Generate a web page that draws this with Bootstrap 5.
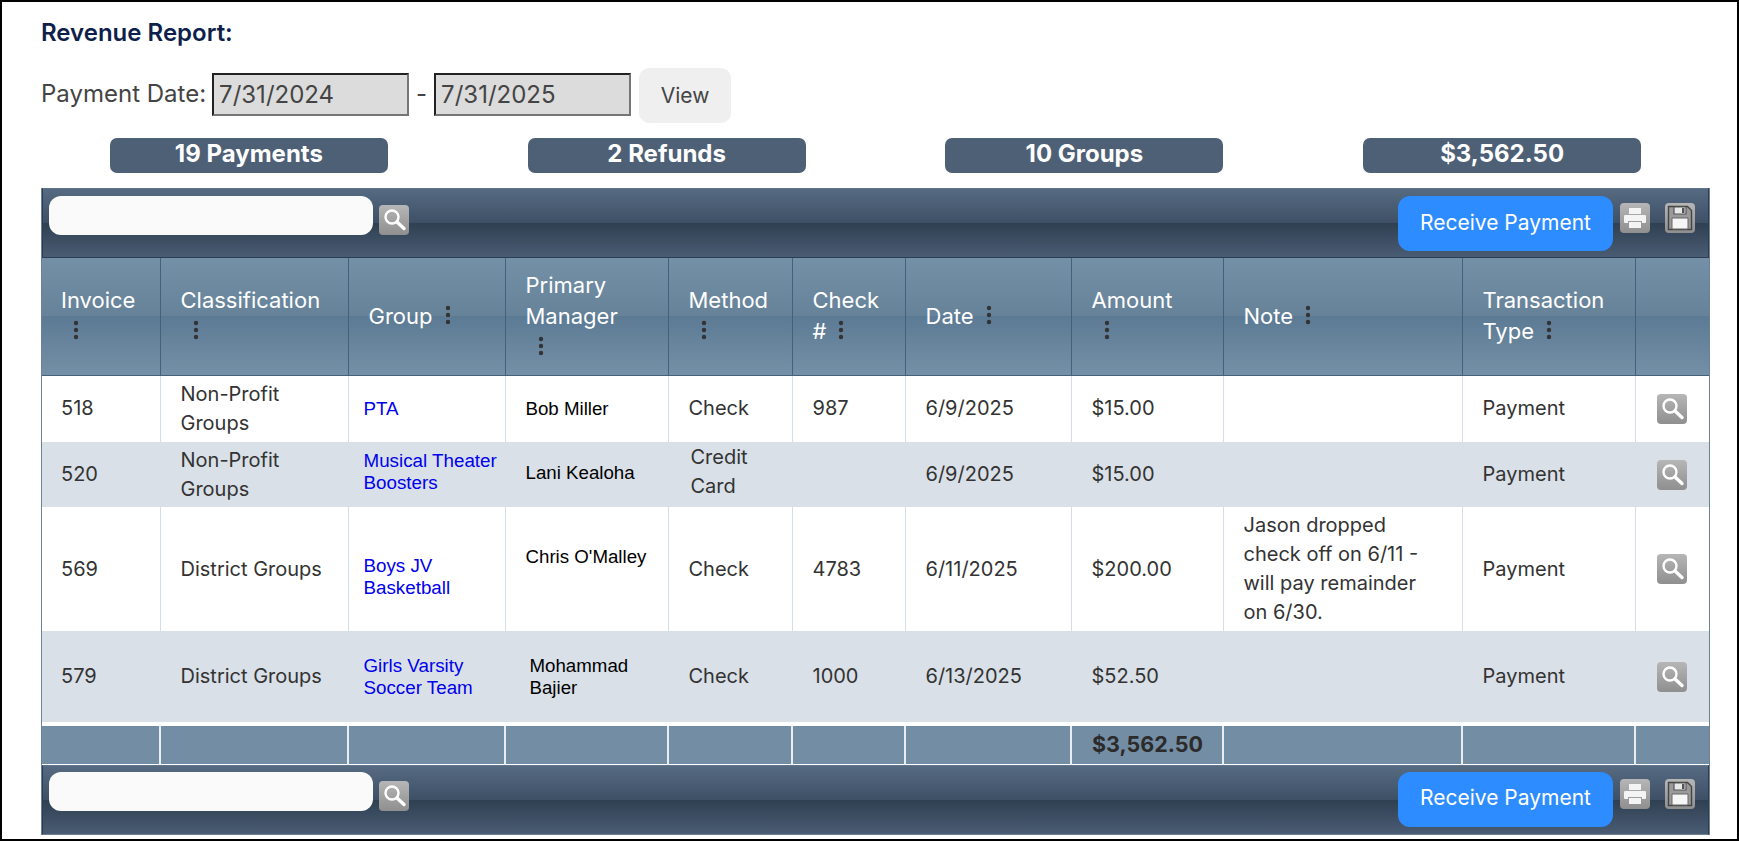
<!DOCTYPE html>
<html lang="en">
<head>
    <meta charset="UTF-8">
    <meta name="viewport" content="width=device-width, initial-scale=1.0">
    <title>Revenue Report</title>
    <link href="https://cdn.jsdelivr.net/npm/bootstrap@5.3.0/dist/css/bootstrap.min.css" rel="stylesheet">
    <style>
        html, body { height: 100%; overflow: hidden; }
        body {
            font-family: Inter, "Liberation Sans", sans-serif;
            background: #fff;
            color: #333;
        }
        .page-frame {
            height: 841px;
            border: 2px solid #000;
            padding: 0 27px 0 39px;
        }
        .report-title {
            font-size: 24px;
            font-weight: 600;
            color: #0f1f4b;
            margin: 0;
            padding-top: 19px;
            height: 66px;
            line-height: 24px;
        }
        .filter-row { height: 55px; font-size: 24px; color: #444; }
        .filter-label { margin: 0 6px 4px 0; }
        .date-box {
            width: 197px;
            height: 43px;
            margin-bottom: 2px;
            background: #dcdcdc;
            border-style: solid;
            border-width: 2px;
            border-color: #222 #767676 #767676 #222;
            font-size: 24px;
            color: #444;
            padding: 0 5px;
            font-family: inherit;
        }
        .date-dash { margin: 0 7px 4px; }
        .view-btn {
            width: 92px;
            height: 55px;
            background: #efefef;
            border: 0;
            border-radius: 10px;
            font-size: 21px;
            color: #444;
        }
        .stat-row { margin: 15px -1px 15px; }
        .stat-pill {
            width: 278px;
            height: 35px;
            margin: 0 auto;
            background: #4e6076;
            border-radius: 7px;
            color: #fff;
            font-weight: 700;
            font-size: 24px;
            line-height: 32px;
            text-align: center;
        }
        .grid-wrap { border-left: 1px solid #6d8299; border-right: 1px solid #6d8299; }
        .tool-bar {
            height: 70px;
            border: 1px solid #2c3d50;
            border-top-color: #5f7690;
            padding: 7px 13px 0 6px;
            background: linear-gradient(#566a82 0, #3d5066 50%, #2f4052 50%, #4a5c73 100%);
        }
        .tool-bar-end { border-bottom-color: #6d8299; padding-top: 6px; }
        .search-box {
            width: 324px;
            height: 39px;
            border: 0;
            border-radius: 12px;
            background: #fafafa;
        }
        .img-btn {
            display: block;
            width: 30px;
            height: 30px;
            border-radius: 4px;
            background: linear-gradient(#b6b6b6, #8f8f8f);
        }
        .tool-bar .find-btn { margin: 9px 0 0 6px; }
        .tool-bar .print-btn { margin: 7px 0 0 7px; }
        .tool-bar .save-btn { margin: 7px 0 0 15px; }
        .pay-btn {
            width: 215px;
            height: 55px;
            padding-bottom: 3px;
            border: 0;
            border-radius: 12px;
            background: #2d8cff;
            color: #fff;
            font-size: 21px;
        }
        .report-grid {
            width: 100%;
            table-layout: fixed;
            border-collapse: collapse;
            font-size: 20px;
            line-height: 29px;
        }
        .report-grid thead th {
            height: 117px;
            font-weight: 400;
            color: #fff;
            font-size: 22px;
            line-height: 31px;
            padding: 0 35px 0 20px;
            border-right: 1px solid #45607a;
            border-bottom: 1px solid #45607a;
            background: linear-gradient(#7490a6 0, #668299 50%, #5c7a94 50%, #7490a6 100%);
        }
        .report-grid thead th:first-child { padding-left: 19px; }
        .report-grid thead th:last-child { border-right: 0; }
        .report-grid tbody td {
            padding: 0 12px 0 20px;
            border-right: 1px solid #d5dde6;
            vertical-align: middle;
        }
        .report-grid tbody td:first-child { padding-left: 19px; }
        .report-grid tbody td:last-child { border-right: 0; text-align: center; padding: 0; }
        .report-grid tbody td.note-cell { padding-right: 30px; }
        .report-grid tbody td.link-cell { padding: 0 2px 0 15px; }
        .report-grid tbody td.link-up { padding-bottom: 5px; }
        .report-grid tbody td.link-down { padding-top: 16px; }
        .report-grid tbody td.name-up { padding-bottom: 4px; }
        .report-grid tbody td.name-high { padding-bottom: 24px; }
        .report-grid tbody td.name-in { padding-left: 24px; }
        .report-grid tbody td.method-up { padding: 0 12px 5px 22px; }
        .report-grid tbody tr.alt-row td { background: #d9e0e7; border-right-color: #d9e0e7; }
        .row-a { height: 67px; }
        .row-b { height: 65px; }
        .row-c { height: 124px; }
        .row-d { height: 93px; }
        .group-link { color: #0000ee; text-decoration: none; font-family: "Liberation Sans", sans-serif; font-size: 18.8px; line-height: 22px; display: block; }
        .person-name { color: #000; font-family: "Liberation Sans", sans-serif; font-size: 18.7px; line-height: 22px; display: block; }
        .kebab { display: inline-block; vertical-align: -1px; margin-left: 12px; }
        .report-grid tfoot td {
            height: 40px;
            background: #738ea4;
            border-top: 4px solid #fff;
            border-right: 2px solid #e9edf1;
            border-bottom: 1px solid #fff;
            font-weight: 700;
            font-size: 21.5px;
            padding: 0 0 2px 20px;
            color: #2b2b2b;
            line-height: 30px;
        }
        .report-grid tfoot td:last-child { border-right: 0; }
    </style>
</head>
<body>

<svg class="d-none">
    <symbol id="icon-search" viewBox="0 0 30 30">
        <circle cx="13" cy="12" r="6.5" fill="none" stroke="#fff" stroke-width="2.4"/>
        <path d="M18 17l7 6.500" stroke="#fff" stroke-width="3.4" stroke-linecap="round"/>
    </symbol>
    <symbol id="icon-print" viewBox="0 0 30 30">
        <path d="M9 5h12v6H9zM5 12h20a1 1 0 0 1 1 1v6a1 1 0 0 1-1 1h-3v-2H8v2H5a1 1 0 0 1-1-1v-6a1 1 0 0 1 1-1zM9 19h12v6H9z" fill="#f4f4f4"/>
    </symbol>
    <symbol id="icon-save" viewBox="0 0 30 30">
        <path d="M3.500 3.500h19l4 4v19h-23z" fill="#9a9a9a" stroke="#444" stroke-width="1.4"/>
        <path d="M9 4h12v7H9z" fill="#e8e8e8" stroke="#555" stroke-width="1.2"/>
        <path d="M17 5h2.500v5H17z" fill="#555"/>
        <path d="M7 15h16v11H7z" fill="#f6f6f6" stroke="#666" stroke-width="1"/>
    </symbol>
    <symbol id="icon-kebab" viewBox="0 0 6 20">
        <circle cx="3" cy="3" r="2.2" fill="#333"/>
        <circle cx="3" cy="10" r="2.2" fill="#333"/>
        <circle cx="3" cy="17" r="2.2" fill="#333"/>
    </symbol>
</svg>

<div class="page-frame">
    <h1 class="report-title">Revenue Report:</h1>

    <div class="filter-row d-flex align-items-center">
        <span class="filter-label">Payment Date:</span>
        <input class="date-box" type="text" value="7/31/2024" disabled>
        <span class="date-dash">-</span>
        <input class="date-box" type="text" value="7/31/2025" disabled>
        <button class="view-btn ms-2" type="button">View</button>
    </div>

    <div class="row g-0 stat-row">
        <div class="col-3"><div class="stat-pill">19 Payments</div></div>
        <div class="col-3"><div class="stat-pill">2 Refunds</div></div>
        <div class="col-3"><div class="stat-pill">10 Groups</div></div>
        <div class="col-3"><div class="stat-pill">$3,562.50</div></div>
    </div>

    <div class="grid-wrap">
        <div class="tool-bar d-flex">
            <input class="search-box" type="text">
            <svg class="img-btn find-btn" viewBox="0 0 30 30"><use href="#icon-search"/></svg>
            <button class="pay-btn ms-auto" type="button">Receive Payment</button>
            <svg class="img-btn print-btn" viewBox="0 0 30 30"><use href="#icon-print"/></svg>
            <svg class="img-btn save-btn" viewBox="0 0 30 30"><use href="#icon-save"/></svg>
        </div>

        <table class="report-grid">
            <colgroup>
                <col style="width:118px"><col style="width:188px"><col style="width:157px"><col style="width:163px"><col style="width:124px"><col style="width:113px"><col style="width:166px"><col style="width:152px"><col style="width:239px"><col style="width:173px"><col>
            </colgroup>
            <thead>
                <tr>
                    <th>Invoice<svg class="kebab" width="6" height="20"><use href="#icon-kebab"/></svg></th>
                    <th>Classification<svg class="kebab" width="6" height="20"><use href="#icon-kebab"/></svg></th>
                    <th>Group<svg class="kebab" width="6" height="20"><use href="#icon-kebab"/></svg></th>
                    <th>Primary Manager<svg class="kebab" width="6" height="20"><use href="#icon-kebab"/></svg></th>
                    <th>Method<svg class="kebab" width="6" height="20"><use href="#icon-kebab"/></svg></th>
                    <th>Check #<svg class="kebab" width="6" height="20"><use href="#icon-kebab"/></svg></th>
                    <th>Date<svg class="kebab" width="6" height="20"><use href="#icon-kebab"/></svg></th>
                    <th>Amount<svg class="kebab" width="6" height="20"><use href="#icon-kebab"/></svg></th>
                    <th>Note<svg class="kebab" width="6" height="20"><use href="#icon-kebab"/></svg></th>
                    <th>Transaction Type<svg class="kebab" width="6" height="20"><use href="#icon-kebab"/></svg></th>
                    <th></th>
                </tr>
            </thead>
            <tbody>
                <tr class="row-a">
                    <td>518</td><td>Non-Profit Groups</td><td class="link-cell"><a class="group-link" href="#">PTA</a></td><td><span class="person-name">Bob Miller</span></td><td>Check</td><td>987</td><td>6/9/2025</td><td>$15.00</td><td></td><td>Payment</td>
                    <td><svg class="img-btn mx-auto" viewBox="0 0 30 30"><use href="#icon-search"/></svg></td>
                </tr>
                <tr class="row-b alt-row">
                    <td>520</td><td>Non-Profit Groups</td><td class="link-cell link-up"><a class="group-link" href="#">Musical Theater Boosters</a></td><td class="name-up"><span class="person-name">Lani Kealoha</span></td><td class="method-up">Credit Card</td><td></td><td>6/9/2025</td><td>$15.00</td><td></td><td>Payment</td>
                    <td><svg class="img-btn mx-auto" viewBox="0 0 30 30"><use href="#icon-search"/></svg></td>
                </tr>
                <tr class="row-c">
                    <td>569</td><td>District Groups</td><td class="link-cell link-down"><a class="group-link" href="#">Boys JV Basketball</a></td><td class="name-high"><span class="person-name">Chris O'Malley</span></td><td>Check</td><td>4783</td><td>6/11/2025</td><td>$200.00</td><td class="note-cell">Jason dropped check off on 6/11 - will pay remainder on 6/30.</td><td>Payment</td>
                    <td><svg class="img-btn mx-auto" viewBox="0 0 30 30"><use href="#icon-search"/></svg></td>
                </tr>
                <tr class="row-d alt-row">
                    <td>579</td><td>District Groups</td><td class="link-cell"><a class="group-link" href="#">Girls Varsity Soccer Team</a></td><td class="name-in"><span class="person-name">Mohammad Bajier</span></td><td>Check</td><td>1000</td><td>6/13/2025</td><td>$52.50</td><td></td><td>Payment</td>
                    <td><svg class="img-btn mx-auto" viewBox="0 0 30 30"><use href="#icon-search"/></svg></td>
                </tr>
            </tbody>
            <tfoot>
                <tr>
                    <td></td><td></td><td></td><td></td><td></td><td></td><td></td><td>$3,562.50</td><td></td><td></td><td></td>
                </tr>
            </tfoot>
        </table>

        <div class="tool-bar tool-bar-end d-flex">
            <input class="search-box" type="text">
            <svg class="img-btn find-btn" viewBox="0 0 30 30"><use href="#icon-search"/></svg>
            <button class="pay-btn ms-auto" type="button">Receive Payment</button>
            <svg class="img-btn print-btn" viewBox="0 0 30 30"><use href="#icon-print"/></svg>
            <svg class="img-btn save-btn" viewBox="0 0 30 30"><use href="#icon-save"/></svg>
        </div>
    </div>
</div>

<script src="https://cdn.jsdelivr.net/npm/bootstrap@5.3.0/dist/js/bootstrap.bundle.min.js"></script>
</body>
</html>
